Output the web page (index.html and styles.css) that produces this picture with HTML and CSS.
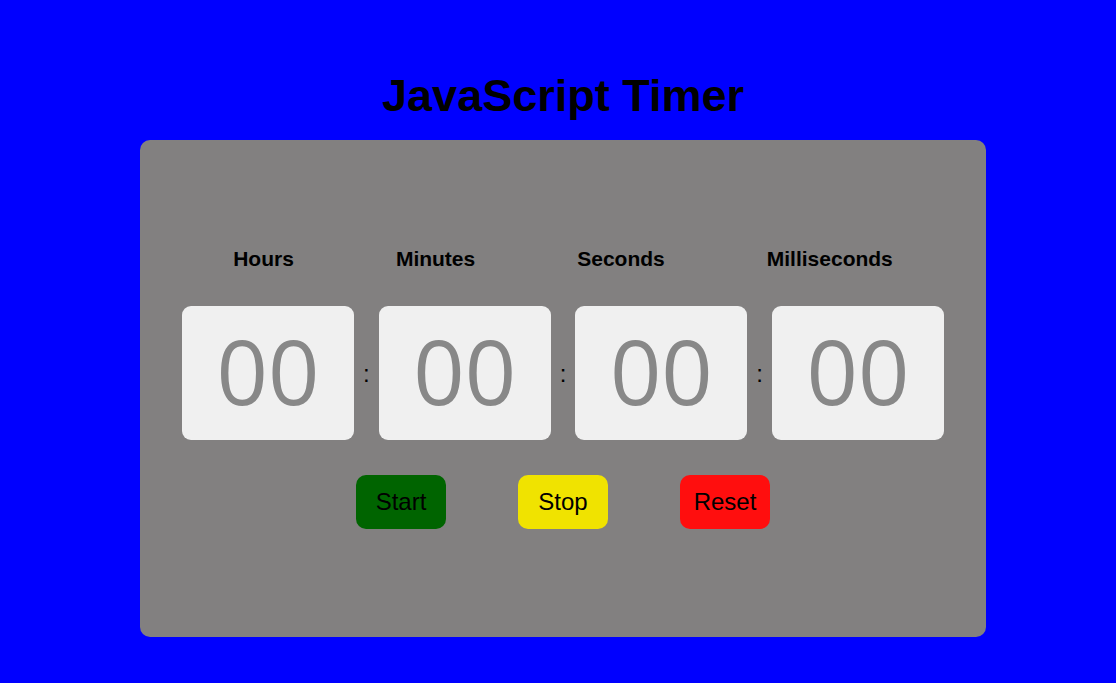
FILE: index.html
```html
<!DOCTYPE html>
<html>
<head>
<meta charset="utf-8">
<title>JavaScript Timer</title>
<link rel="stylesheet" href="styles.css">
</head>
<body>
<div class="page">
  <h1 class="title">JavaScript Timer</h1>
  <div class="panel">
    <div class="labels">
      <span>Hours</span>
      <span>Minutes</span>
      <span>Seconds</span>
      <span>Milliseconds</span>
    </div>
    <div class="clock">
      <div class="digits">00</div>
      <span class="colon">:</span>
      <div class="digits">00</div>
      <span class="colon">:</span>
      <div class="digits">00</div>
      <span class="colon">:</span>
      <div class="digits">00</div>
    </div>
    <div class="buttons">
      <button class="btn start">Start</button>
      <button class="btn stop">Stop</button>
      <button class="btn reset">Reset</button>
    </div>
  </div>
</div>
</body>
</html>
```
FILE: styles.css
```css
html, body {
  margin: 0;
  padding: 0;
  background: #0000ff;
  font-family: "Liberation Sans", Arial, sans-serif;
}
.page {
  width: 846px;
  margin-left: 140px;
  padding-top: 70px;
}
.title {
  margin: 0;
  height: 70px;
  font-size: 45px;
  font-weight: bold;
  line-height: 52px;
  text-align: center;
  color: #000;
}
.panel {
  background: #828080;
  border-radius: 10px;
  height: 497px;
  box-sizing: border-box;
  padding-top: 107px;
}
.labels {
  display: flex;
  justify-content: center;
  gap: 102px;
  font-size: 21px;
  font-weight: bold;
  line-height: 24px;
  color: #000;
}
.clock {
  margin-top: 35px;
  display: flex;
  justify-content: center;
  align-items: center;
  gap: 0;
}
.digits {
  box-sizing: border-box;
  width: 172px;
  height: 134px;
  padding-bottom: 7px;
  background: #f0f0f0;
  border-radius: 9px;
  display: flex;
  align-items: center;
  justify-content: center;
  font-family: "Open Sans", sans-serif;
  font-size: 90px;
  color: #888888;
  line-height: 1;
}
.colon {
  width: 24.7px;
  text-align: center;
  font-size: 24px;
  color: #000;
  margin-top: 2px;
}
.buttons {
  margin-top: 35px;
  display: flex;
  justify-content: center;
  gap: 72px;
}
.btn {
  width: 90px;
  height: 54px;
  border: none;
  border-radius: 10px;
  font-family: "Liberation Sans", Arial, sans-serif;
  font-size: 24px;
  color: #000;
  padding: 0;
}
.start { background: #006400; }
.stop { background: #f0e300; }
.reset { background: #ff0e0e; }
```
